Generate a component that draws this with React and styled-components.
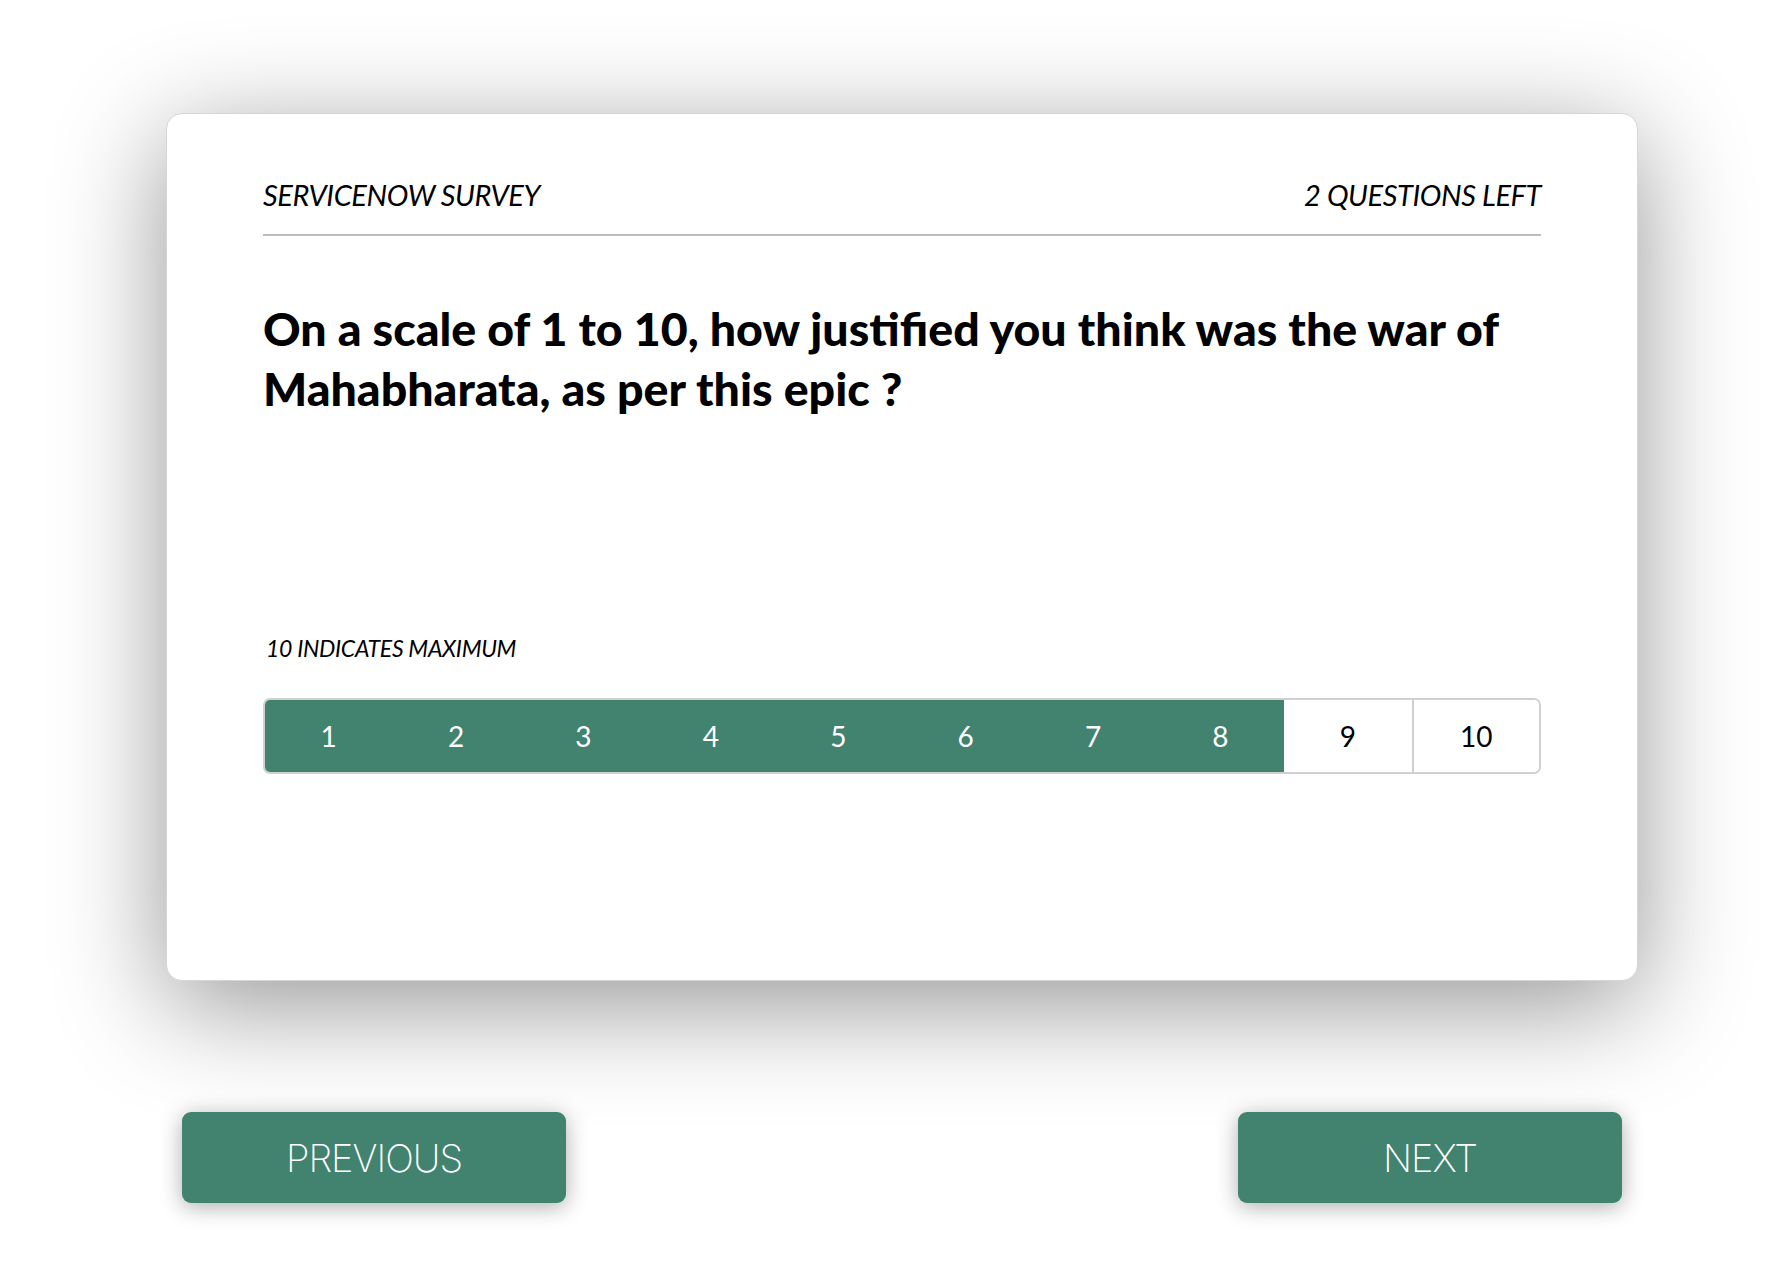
import React from "react";
import styled, { createGlobalStyle } from "styled-components";

const Global = createGlobalStyle`
  html, body { margin: 0; padding: 0; background: #ffffff; }
  body { font-family: "Lato", "Liberation Sans", sans-serif; color: #000; }
  * { box-sizing: border-box; }
`;

const Page = styled.div`
  width: 1792px;
  height: 1286px;
  overflow: hidden;
  padding: 113px 154px 0 166px;
`;

const Card = styled.section`
  width: 1472px;
  height: 868px;
  background: #fff;
  border-radius: 16px;
  border: 1px solid #d6d6d6;
  box-shadow: 0 24px 110px rgba(0, 0, 0, 0.42);
  padding: 64px 96px 0 96px;
  display: flex;
  flex-direction: column;
`;

const Header = styled.header`
  display: flex;
  justify-content: space-between;
  align-items: center;
  padding-bottom: 22px;
  border-bottom: 2px solid #bdbdbd;
`;

const HeaderText = styled.span`
  font-family: "Lato", sans-serif;
  font-style: italic;
  font-weight: 400;
  font-size: 29px;
  line-height: 34px;
  letter-spacing: -0.4px;
`;

const Question = styled.h1`
  margin: 62px 0 0 0;
  font-family: "Lato", sans-serif;
  font-weight: 900;
  font-size: 46.5px;
  line-height: 60px;
  letter-spacing: 0;
`;

const Hint = styled.div`
  margin-top: 216px;
  padding-left: 3px;
  font-family: "Lato", sans-serif;
  font-style: italic;
  font-size: 23px;
  line-height: 28px;
  letter-spacing: -0.3px;
`;

const Scale = styled.div`
  margin-top: 36px;
  display: grid;
  grid-template-columns: repeat(10, 1fr);
  height: 76px;
  border-radius: 7px;
  overflow: hidden;
  border: 2px solid #d0d0d0;
`;

const Cell = styled.button`
  border: none;
  padding: 0;
  font-family: "Lato", sans-serif;
  font-size: 28px;
  background: ${(p) => (p.$active ? "#41836f" : "#ffffff")};
  color: ${(p) => (p.$active ? "#ffffff" : "#000000")};
  border-left: ${(p) => (p.$divider ? "2px solid #d0d0d0" : "none")};
  margin: ${(p) => (p.$active ? "-2px 0" : "0")};
  display: flex;
  align-items: center;
  justify-content: center;
`;

const Nav = styled.nav`
  display: flex;
  justify-content: space-between;
  padding: 0 16px;
  margin-top: 131px;
`;

const NavButton = styled.button`
  width: 384px;
  height: 91px;
  border: none;
  border-radius: 9px;
  background: #41836f;
  color: #fff;
  font-family: "Inter", sans-serif;
  font-weight: 200;
  font-size: 38px;
  letter-spacing: -1px;
  box-shadow: 0 4px 22px rgba(0, 0, 0, 0.32);
  display: flex;
  align-items: center;
  justify-content: center;
`;

export default function App() {
  const selected = 8;
  return (
    <Page>
      <Global />
      <Card>
        <Header>
          <HeaderText>SERVICENOW SURVEY</HeaderText>
          <HeaderText>2 QUESTIONS LEFT</HeaderText>
        </Header>
        <Question>
          On a scale of 1 to 10, how justified you think was the war of
          <br />
          Mahabharata, as per this epic ?
        </Question>
        <Hint>10 INDICATES MAXIMUM</Hint>
        <Scale>
          {Array.from({ length: 10 }, (_, i) => i + 1).map((n) => (
            <Cell key={n} $active={n <= selected} $divider={n > selected + 1}>
              {n}
            </Cell>
          ))}
        </Scale>
      </Card>
      <Nav>
        <NavButton>PREVIOUS</NavButton>
        <NavButton>NEXT</NavButton>
      </Nav>
    </Page>
  );
}
